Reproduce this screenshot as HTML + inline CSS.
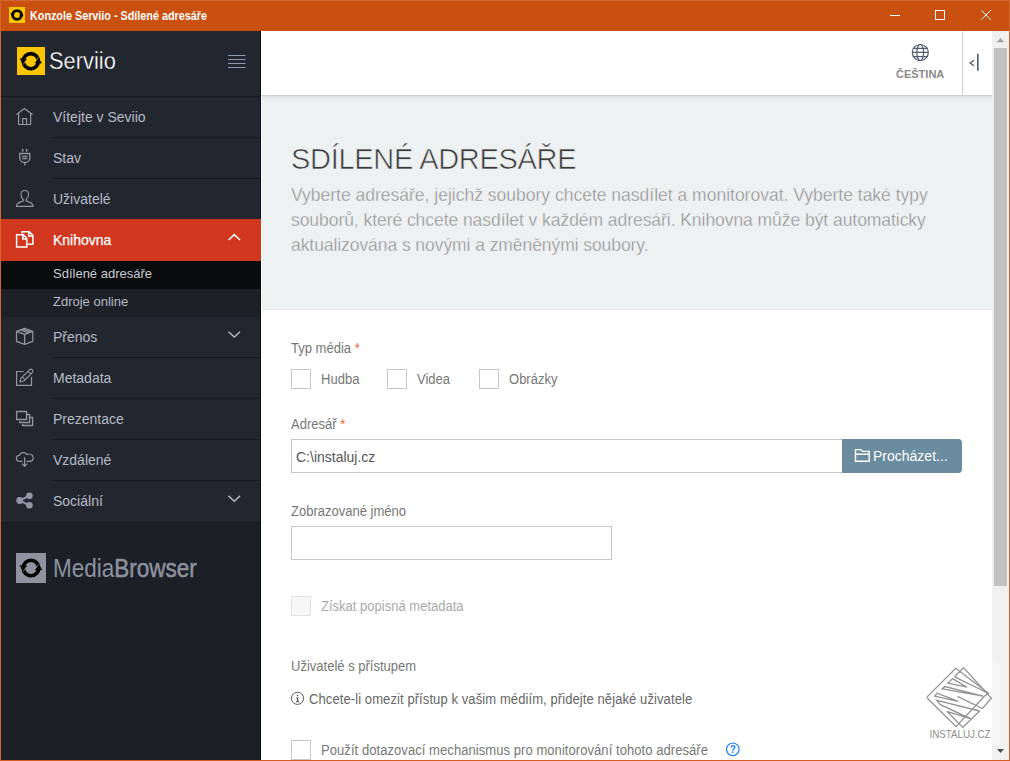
<!DOCTYPE html>
<html><head><meta charset="utf-8">
<style>
*{margin:0;padding:0;box-sizing:border-box}
html,body{width:1010px;height:761px;overflow:hidden;background:#fff;font-family:"Liberation Sans",sans-serif}
.a{position:absolute}
.t{position:absolute;white-space:nowrap;line-height:1}
#titlebar{left:0;top:0;width:1010px;height:31px;background:#ca5010}
#side{left:1px;top:31px;width:260px;height:729px;background:#1c1f26}
.item{position:absolute;left:1px;width:259px;height:41px;background:#22262f}
.sep{position:absolute;left:53px;width:207px;height:1px;background:#15171c}
.mi{position:absolute;left:53px;font-size:14px;color:#b7bbc6}
</style></head><body>
<!-- title bar -->
<div id="titlebar" class="a"></div>
<div class="a" style="left:0;top:0;width:1010px;height:1px;background:#d4672f"></div>
<div class="t" style="left:30px;top:9px;font-size:13px;font-weight:bold;color:#fff;transform:scaleX(0.83);transform-origin:0 0">Konzole Serviio - Sdílené adresáře</div>

<!-- sidebar -->
<div id="side" class="a"></div>
<div class="a" style="left:1px;top:31px;width:259px;height:65px;background:#22262f"></div>
<div class="a" style="left:1px;top:96px;width:259px;height:1px;background:#17191e"></div>
<div class="item" style="top:97px"></div>
<div class="item" style="top:138px"></div>
<div class="item" style="top:179px"></div>
<div class="a" style="left:260px;top:31px;width:1px;height:729px;background:#0e1015"></div>
<div class="a" style="left:1px;top:219px;width:260px;height:42px;background:#d1361f"></div>
<div class="a" style="left:1px;top:261px;width:260px;height:28px;background:#0a0b0d"></div>
<div class="a" style="left:1px;top:289px;width:259px;height:28px;background:#1d2027"></div>
<div class="item" style="top:317px"></div>
<div class="item" style="top:358px"></div>
<div class="item" style="top:399px"></div>
<div class="item" style="top:440px"></div>
<div class="item" style="top:481px"></div>
<div class="a" style="left:1px;top:522px;width:259px;height:1px;background:#17191e"></div>
<div class="sep" style="top:137px"></div>
<div class="sep" style="top:178px"></div>
<div class="sep" style="top:357px"></div>
<div class="sep" style="top:398px"></div>
<div class="sep" style="top:439px"></div>
<div class="sep" style="top:480px"></div>

<div class="t" style="left:49px;top:50px;font-size:23.5px;color:#fff;transform:scaleX(0.93);transform-origin:0 0;-webkit-text-stroke:0.3px #22262f">Serviio</div>
<div class="t mi" style="top:110px">Vítejte v Seviio</div>
<div class="t mi" style="top:151px">Stav</div>
<div class="t mi" style="top:192px">Uživatelé</div>
<div class="t mi" style="top:233px;color:#fff;-webkit-text-stroke:0.25px #fff">Knihovna</div>
<div class="t mi" style="top:267px;font-size:13px;color:#c9ccd4">Sdílené adresáře</div>
<div class="t mi" style="top:295px;font-size:13px">Zdroje online</div>
<div class="t mi" style="top:330px">Přenos</div>
<div class="t mi" style="top:371px">Metadata</div>
<div class="t mi" style="top:412px">Prezentace</div>
<div class="t mi" style="top:453px">Vzdálené</div>
<div class="t mi" style="top:494px">Sociální</div>
<div class="t" style="left:52.5px;top:556px;font-size:25px;color:#8e929f;transform:scaleX(0.9);transform-origin:0 0">Media<span style="-webkit-text-stroke:0.5px #8e929f">Browser</span></div>

<!-- content -->
<div class="a" style="left:261px;top:31px;width:731px;height:64px;background:#fff"></div>
<div class="a" style="left:261px;top:95px;width:731px;height:1px;background:#cfcfcf"></div>
<div class="a" style="left:262px;top:96px;width:730px;height:214px;background:#eef1f2"></div>
<div class="a" style="left:262px;top:309px;width:730px;height:1px;background:#e8eaeb"></div>
<div class="a" style="left:262px;top:96px;width:730px;height:4px;background:linear-gradient(rgba(0,0,0,0.07),rgba(0,0,0,0))"></div>
<div class="a" style="left:962px;top:31px;width:1px;height:64px;background:#d0d0d0"></div>
<div class="t" style="left:896px;top:69px;font-size:11px;font-weight:bold;color:#8a8a8a">ČEŠTINA</div>

<div class="t" style="left:291px;top:145px;font-size:29px;letter-spacing:-0.3px;color:#3c3c3c;-webkit-text-stroke:0.6px #eef1f2">SDÍLENÉ ADRESÁŘE</div>
<div class="a" style="left:291px;top:183px;font-size:17.5px;line-height:25px;color:#8f8f8f;white-space:nowrap;-webkit-text-stroke:0.35px #eef1f2">Vyberte adresáře, jejichž soubory chcete nasdílet a monitorovat. Vyberte také typy<br><span style="letter-spacing:-0.055px">souborů, které chcete nasdílet v každém adresáři. Knihovna může být automaticky</span><br><span style="letter-spacing:-0.07px">aktualizována s novými a změněnými soubory.</span></div>

<div class="t" style="left:291px;top:341px;font-size:14px;transform:scaleX(0.93);transform-origin:0 0;color:#777">Typ média <span style="color:#e8603c">*</span></div>
<div class="a" style="left:291px;top:369px;width:20px;height:20px;border:1px solid #c6c6cc"></div>
<div class="t" style="left:321px;top:372px;font-size:14px;transform:scaleX(0.93);transform-origin:0 0;color:#777">Hudba</div>
<div class="a" style="left:387px;top:369px;width:20px;height:20px;border:1px solid #c6c6cc"></div>
<div class="t" style="left:417px;top:372px;font-size:14px;transform:scaleX(0.93);transform-origin:0 0;color:#777">Videa</div>
<div class="a" style="left:479px;top:369px;width:20px;height:20px;border:1px solid #c6c6cc"></div>
<div class="t" style="left:509px;top:372px;font-size:14px;transform:scaleX(0.93);transform-origin:0 0;color:#777">Obrázky</div>

<div class="t" style="left:291px;top:417px;font-size:14px;transform:scaleX(0.93);transform-origin:0 0;color:#777">Adresář <span style="color:#e8603c">*</span></div>
<div class="a" style="left:291px;top:439px;width:552px;height:34px;border:1px solid #c8c8c8;border-right:none"></div>
<div class="t" style="left:296px;top:450px;font-size:14px;color:#555">C:\instaluj.cz</div>
<div class="a" style="left:842px;top:439px;width:120px;height:34px;background:#6b8c9f;border-radius:0 4px 4px 0"></div>
<div class="t" style="left:873px;top:449px;font-size:14px;color:#fff">Procházet...</div>

<div class="t" style="left:291px;top:504px;font-size:14px;transform:scaleX(0.93);transform-origin:0 0;color:#777">Zobrazované jméno</div>
<div class="a" style="left:291px;top:526px;width:321px;height:34px;border:1px solid #c8c8c8"></div>

<div class="a" style="left:291px;top:596px;width:20px;height:20px;border:1px solid #e2e2e2;background:#f7f7f7"></div>
<div class="t" style="left:321px;top:599px;font-size:14px;transform:scaleX(0.93);transform-origin:0 0;color:#aaa">Získat popisná metadata</div>

<div class="t" style="left:291px;top:659px;font-size:14px;transform:scaleX(0.93);transform-origin:0 0;color:#777">Uživatelé s přístupem</div>
<div class="t" style="left:309px;top:692px;font-size:14px;transform:scaleX(0.93);transform-origin:0 0;color:#666;letter-spacing:0.09px">Chcete-li omezit přístup k vašim médiím, přidejte nějaké uživatele</div>
<div class="a" style="left:291px;top:740px;width:20px;height:20px;border:1px solid #c6c6cc"></div>
<div class="t" style="left:321px;top:743px;font-size:14px;transform:scaleX(0.93);transform-origin:0 0;color:#777;letter-spacing:0.06px">Použít dotazovací mechanismus pro monitorování tohoto adresáře</div>

<!-- scrollbar -->
<div class="a" style="left:992px;top:31px;width:17px;height:729px;background:#f0f0f0"></div>
<div class="a" style="left:994px;top:48px;width:13px;height:538px;background:#c1c1c1"></div>

<div class="a" style="left:992px;top:661px;width:8px;height:84px;background:rgba(255,255,255,0.45);border-radius:0 6px 0 0"></div>
<!-- borders -->
<div class="a" style="left:0;top:0;width:1px;height:761px;background:#d4672f"></div>
<div class="a" style="left:1009px;top:0;width:1px;height:761px;background:#d4672f"></div>
<div class="a" style="left:0;top:760px;width:1010px;height:1px;background:#d25c22"></div>

<svg class="a" style="left:0;top:0" width="1010" height="761" viewBox="0 0 1010 761">
<!-- title logo -->
<rect x="9" y="7" width="16" height="16" fill="#fdc400"/>
<g transform="translate(17,14.9) scale(0.6)">
<circle cx="0" cy="0" r="7.3" fill="none" stroke="#000" stroke-width="4.6"/>
<path d="M-11.2,-2.7 L-3.8,-2.3 L-7.6,3.1 Z M11.1,2.3 L3.8,1.9 L7.7,-3.6 Z" fill="#000"/>
</g>
<!-- header logo -->
<rect x="17" y="47" width="28" height="28" fill="#fdc400"/>
<g transform="translate(30.8,61.2)">
<circle cx="0" cy="0" r="7.6" fill="none" stroke="#000" stroke-width="3.6"/>
<path d="M-11.2,-2.7 L-3.8,-2.3 L-7.6,3.1 Z M11.1,2.3 L3.8,1.9 L7.7,-3.6 Z" fill="#000"/>
<path d="M-4.2,-1.5 L-7.8,3.5 M4.2,1.2 L7.9,-4" stroke="#fdc400" stroke-width="0.7"/>
</g>
<!-- hamburger -->
<path d="M228,55.5 H245.5 M228,59.5 H245.5 M228,63.5 H245.5 M228,67.5 H245.5" stroke="#8d9bb0" stroke-width="1"/>
<!-- sidebar icons -->
<g fill="none" stroke="#9296a5" stroke-width="1.2" stroke-linejoin="round">
<path d="M16.5,114.5 L24.5,108.5 L32.5,114.5 M18.6,113 V124.5 H30.6 V113 M22.6,124.5 V118.6 H26.6 V124.5"/>
<path d="M22.6,148.8 V151.8 M26.7,148.8 V151.8" stroke-width="1.4"/>
<path d="M19.8,153.5 H29.8 V158.2 C29.8,160.8 27.6,162.5 24.8,162.5 C22,162.5 19.8,160.8 19.8,158.2 Z M22.2,156.4 H27.4 M22.2,158.5 H27.4 M24.8,162.5 V165.6" stroke-width="1.3"/>
<path d="M23.6,200 C21.6,198.2 20.9,196.3 20.9,194.2 C20.9,191.6 22.6,190.5 24.8,190.5 C27,190.5 28.6,191.6 28.6,194.2 C28.6,196.3 27.6,198.2 25.8,200 L26.3,201.1 C30.6,202.1 33.2,204 33.2,206.4 H16.4 C16.4,204 19.1,202.1 23.1,201.1 Z" stroke-width="1.1"/>
<path d="M16.5,331.4 L24.6,328.4 L32.8,331.4 L24.6,334.4 Z M16.5,331.4 V341.4 L24.6,344.4 L32.8,341.4 V331.4 M24.6,334.4 V344.4 M20.3,329.9 L28.6,333 M22.6,329.2 L30.6,332.1"/>
<path d="M23.8,371.5 H16.6 V385.4 H31.5 V377"/>
<path d="M20,382 L21,378.2 L29.5,369.8 Q31,368.5 32.4,369.9 Q33.6,371.3 32.3,372.6 L23.9,381 Z M22.3,377.2 L24.9,379.7 M28.2,371.4 L30.9,374" stroke-width="1.1"/>
<path d="M16.6,411.5 H26.6 V419.5 H16.6 Z M27,414.5 H29.6 V422.5 H19.6 V421 M30,417.5 H32.6 V425.5 H22.6 V424" stroke-width="1.3"/>
<path d="M22.6,461.3 H19.4 C17.6,461.3 16.4,460 16.4,458.2 C16.4,456.3 17.8,455.2 19.5,455.3 C20,453.6 21.6,452.6 23.5,452.6 C25.1,452.6 26.3,453.4 27,454.5 C27.6,454.1 28.3,453.9 29.2,454 C31.6,454.2 33.2,455.9 33.2,458 C33.2,460 31.6,461.3 29.5,461.3 H26.6 M24.6,457.2 V466 M22,463.7 L24.6,466.4 L27.3,463.7" stroke-width="1.2"/>
<path d="M19.7,500.5 L29.4,495.7 M19.7,500.5 L29.4,505.4" stroke="#9296a5" stroke-width="2"/>
</g>
<circle cx="19.7" cy="500.5" r="3.4" fill="#9296a5"/>
<circle cx="29.4" cy="495.7" r="3.3" fill="#9296a5"/>
<circle cx="29.4" cy="505.3" r="3.3" fill="#9296a5"/>
<!-- knihovna icon -->
<g fill="none" stroke="#fff" stroke-width="1.5" stroke-linejoin="miter">
<path d="M16.6,234.8 H23.3 L26.8,238.3 V247 H16.6 Z M22.8,234.8 V239 H26.8"/>
<path d="M22.2,233.5 V231.8 H29.3 L32.9,235.3 V244.2 H27.5 M28.8,231.8 V236 H32.9"/>
</g>
<!-- chevrons -->
<path d="M228.6,240 L234.3,234.6 L240,240" fill="none" stroke="#fff" stroke-width="1.5"/>
<path d="M228.5,331.8 L234.3,337.1 L240,331.8" fill="none" stroke="#b4b7c2" stroke-width="1.5"/>
<path d="M228.5,495.9 L234.3,501.3 L240,495.9" fill="none" stroke="#b4b7c2" stroke-width="1.5"/>
<!-- mediabrowser logo -->
<rect x="16" y="553" width="30" height="30" fill="#8f929f"/>
<g transform="translate(31,568) scale(1.02)">
<circle cx="0" cy="0" r="7.6" fill="none" stroke="#000" stroke-width="3.6"/>
<path d="M-11.2,-2.7 L-3.8,-2.3 L-7.6,3.1 Z M11.1,2.3 L3.8,1.9 L7.7,-3.6 Z" fill="#000"/>
<path d="M-4.2,-1.5 L-7.8,3.5 M4.2,1.2 L7.9,-4" stroke="#8f929f" stroke-width="0.7"/>
</g>
<!-- globe -->
<g fill="none" stroke="#505c6d" stroke-width="1.2">
<circle cx="920.3" cy="52.5" r="8"/>
<ellipse cx="920.2" cy="52.5" rx="3.4" ry="8"/>
<path d="M912.8,48.3 H927.8 M912.2,52.4 H928.4 M912.8,56.6 H927.8"/>
</g>
<!-- collapse -->
<path d="M974,60.3 L970.2,63 L974,65.7" fill="none" stroke="#4d596a" stroke-width="1.3"/>
<path d="M977.8,53.8 V70.8" stroke="#4d596a" stroke-width="1.6"/>
<!-- folder -->
<path d="M855.5,461.2 V449.6 H860.8 L862.4,451.4 H869.2 V461.2 Z M855.5,454.2 H869.2" fill="none" stroke="#fff" stroke-width="1.4"/>
<!-- info -->
<circle cx="297.5" cy="698.3" r="6.1" fill="none" stroke="#5a5a5a" stroke-width="1"/>
<path d="M296.8,694.7 h1.5 v1.3 h-1.5 Z M296.3,697.2 h2 v4 h1 v1.1 h-3.3 v-1.1 h0.9 v-2.9 h-0.6 Z" fill="#555"/>
<!-- question -->
<circle cx="732.8" cy="749.3" r="6.3" fill="none" stroke="#1f80f0" stroke-width="1.2"/>
<text x="732.8" y="753.3" font-family="Liberation Sans" font-size="10" font-weight="bold" fill="#1f80f0" text-anchor="middle">?</text>
<!-- window controls -->
<path d="M890,15.5 H900" stroke="#fff" stroke-width="1"/>
<rect x="935.5" y="10.5" width="9" height="9" fill="none" stroke="#fff" stroke-width="1"/>
<path d="M981,10 L991,20 M991,10 L981,20" stroke="#fff" stroke-width="1"/>
<!-- scrollbar arrows -->
<path d="M996.6,42.3 L1000.5,38.1 L1004.4,42.3 Z" fill="#a3a3a3"/>
<path d="M997,749 L1000.5,753 L1004,749 Z" fill="#505050"/>
<!-- watermark -->
<g fill="none" stroke="#929292" stroke-width="1.3" stroke-linejoin="miter">
<path d="M926.9,697.1 L955.7,668.3 L988.5,693.2 L984.6,696 L956.1,726.6 L926.9,697.8"/>
<path d="M954.6,676.8 L963.6,667.6 L991.4,698.2 L982.4,708.5 L957.5,696.4"/>
<path d="M954.6,676.8 L986.7,692.5"/>
<path d="M952.5,678.6 L947.9,683.2 L967.1,687.2 Z"/>
<path d="M944.7,686.5 L942.2,688.9 L983.2,696.1 Z"/>
<path d="M937.2,693.2 L934.7,696.1 L958.2,701.3 Z"/>
<path d="M979.6,711 L936.8,700.3 L940.4,704.6 L971,718.8 L946.8,711.3 L962.8,727.4 L979.6,711"/>
</g>
<text x="929.5" y="737.8" font-family="Liberation Sans" font-size="11.5" fill="#8d8d8d" textLength="61" lengthAdjust="spacingAndGlyphs">INSTALUJ.CZ</text>
</svg>
</body></html>
